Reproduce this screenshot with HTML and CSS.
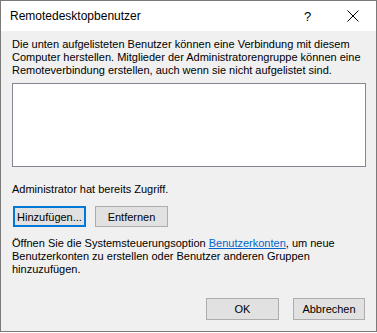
FILE: index.html
```
<!DOCTYPE html>
<html lang="de">
<head>
    <meta charset="UTF-8">
    <title>Remotedesktopbenutzer</title>
    <link rel="stylesheet" href="styles.css">
</head>
<body>

<div class="window">
    <div class="titlebar">
        <span class="title">Remotedesktopbenutzer</span>
        <span class="help">?</span>
        <span class="close">
            <svg width="12" height="12" viewBox="0 0 12 12">
                <path d="M0.5 0.5 L11.5 11.5 M11.5 0.5 L0.5 11.5" stroke="#000" stroke-width="1" fill="none"/>
            </svg>
        </span>
    </div>

    <div class="content">
        <p class="intro">Die unten aufgelisteten Benutzer können eine Verbindung mit diesem Computer herstellen. Mitglieder der Administratorengruppe können eine Remoteverbindung erstellen, auch wenn sie nicht aufgelistet sind.</p>

        <div class="userlist"></div>

        <p class="access">Administrator hat bereits Zugriff.</p>

        <div class="row">
            <button class="btn focused">Hinzufügen...</button>
            <button class="btn">Entfernen</button>
        </div>

        <p class="hint">Öffnen Sie die Systemsteuerungsoption <a href="#">Benutzerkonten</a>, um neue Benutzerkonten zu erstellen oder Benutzer anderen Gruppen hinzuzufügen.</p>

        <div class="actions">
            <button class="btn ok">OK</button>
            <button class="btn cancel">Abbrechen</button>
        </div>
    </div>
</div>

</body>
</html>
```

FILE: styles.css
```
body {
    margin: 0;
    background-color: white;
    font-family: 'Liberation Sans', Arial, sans-serif;
    font-size: 11px;
    color: black;
}
.window {
    width: 377px;
    height: 332px;
    box-sizing: border-box;
    border: 1px solid #7a7a7a;
    background-color: #f0f0f0;
    display: flex;
    flex-direction: column;
}
.titlebar {
    height: 30px;
    background-color: white;
    display: flex;
    align-items: center;
    padding-left: 9px;
    font-size: 12px;
}
.title {
    flex: 1;
}
.help {
    width: 45px;
    text-align: center;
    font-size: 13px;
}
.close {
    width: 45px;
    display: flex;
    justify-content: center;
    margin-right: 1px;
}
.content {
    padding: 7px 10px 0 11px;
    display: flex;
    flex-direction: column;
}
p {
    margin: 0;
    line-height: 13px;
}
.userlist {
    margin-top: 6px;
    height: 84px;
    box-sizing: border-box;
    background-color: white;
    border: 1px solid #828790;
}
.access {
    margin-top: 16px;
}
.row {
    margin-top: 10px;
    display: flex;
    gap: 9px;
    padding-left: 1px;
}
.btn {
    width: 73px;
    height: 21px;
    box-sizing: border-box;
    background-color: #e1e1e1;
    border: 1px solid #adadad;
    font-family: 'Liberation Sans', Arial, sans-serif;
    font-size: 11px;
    color: black;
    padding: 0;
}
.btn.focused {
    border: 2px solid #0078d7;
}
.hint {
    margin-top: 10px;
}
.hint a {
    color: #0066cc;
}
.actions {
    margin-top: 22px;
    display: flex;
    justify-content: flex-end;
    gap: 14px;
    padding-right: 1px;
}
.actions .btn {
    height: 22px;
}
.actions .cancel {
    width: 72px;
}
```
